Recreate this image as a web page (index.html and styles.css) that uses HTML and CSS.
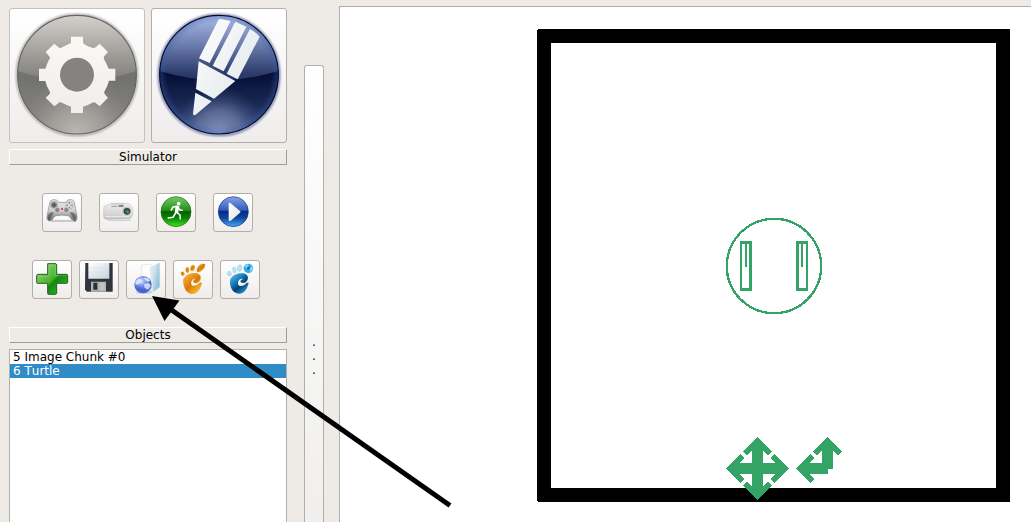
FILE: index.html
```html
<!DOCTYPE html>
<html lang="en">
<head>
<meta charset="utf-8">
<title>Simulator</title>
<link rel="stylesheet" href="styles.css">
</head>
<body>
<div class="app">
  <aside class="panel">
    <div class="modes">
      <button class="tool mode" aria-label="Settings">
        <svg viewBox="27 24 408 405">
          <defs>
            <linearGradient id="gray" x1="0" y1="0" x2="0" y2="1"><stop offset="0" stop-color="#d4d0cc"/><stop offset=".3" stop-color="#a5a19d"/><stop offset=".54" stop-color="#80807c"/><stop offset="1" stop-color="#898682"/></linearGradient>
            <radialGradient id="grayGlow" cx=".5" cy="1" r=".5"><stop offset="0" stop-color="#bbb7b3"/><stop offset=".45" stop-color="#aaa6a2" stop-opacity=".75"/><stop offset="1" stop-color="#888" stop-opacity="0"/></radialGradient>
            <linearGradient id="grayDark" x1="0" y1="0" x2="0" y2="1"><stop offset="0" stop-color="#5d5c59" stop-opacity=".5"/><stop offset="1" stop-color="#777" stop-opacity="0"/></linearGradient>
            <linearGradient id="plate" x1="0" y1="0" x2="0" y2="1"><stop offset="0" stop-color="#faf8f5"/><stop offset="1" stop-color="#f0eeea"/></linearGradient>
            <filter id="soft"><feGaussianBlur stdDeviation="3"/></filter>
          </defs>
          <circle cx="231" cy="225" r="181" fill="none" stroke="#999" stroke-width="5" filter="url(#soft)"/>
          <circle cx="231" cy="224" r="178" fill="url(#gray)"/>
          <path d="M53 213Q231 272 409 213V224A178 178 0 0 1 53 224Z" fill="url(#grayDark)"/>
          <circle cx="231" cy="224" r="178" fill="url(#grayGlow)"/>
          <circle cx="231" cy="224" r="178" fill="none" stroke="#666461" stroke-width="3.5"/>
          <path fill="#858380" d="M180 173H282V275H180Z"/>
          <path fill="url(#plate)" fill-rule="evenodd" d="M213 110H249V128Q250 134 278 144Q284 145 288 141L299 131L324 156L313 168Q309 173 313 179Q323 198 326 206H346V242H327Q323 258 313 275Q310 280 324 293L299 319L287 309Q282 305 277 308Q266 315 249 320V339H213V320Q199 315 180 306L163 319L137 293L149 282Q152 278 148 272Q139 257 136 243H117V206H136Q143 184 151 173L137 156L163 131L175 142Q180 147 188 141Q203 133 213 129ZM231 173A51 51 0 1 0 231 275A51 51 0 1 0 231 173Z"/>
        </svg>
      </button>
      <button class="tool mode" aria-label="Edit">
        <svg viewBox="18 24 408 405">
          <defs>
            <linearGradient id="navy" x1="0" y1="0" x2="0" y2="1"><stop offset="0" stop-color="#adbce8"/><stop offset=".25" stop-color="#6a7bad"/><stop offset=".5" stop-color="#2a3968"/><stop offset=".7" stop-color="#26345f"/><stop offset="1" stop-color="#34487f"/></linearGradient>
            <linearGradient id="navyDark" x1="0" y1="0" x2="0" y2="1"><stop offset="0" stop-color="#020b31"/><stop offset=".5" stop-color="#101e49" stop-opacity=".65"/><stop offset="1" stop-color="#2b3f78" stop-opacity="0"/></linearGradient>
            <radialGradient id="navyGlow" cx=".5" cy="1" r=".4"><stop offset="0" stop-color="#8594c2"/><stop offset=".5" stop-color="#6f7ca5" stop-opacity=".7"/><stop offset="1" stop-color="#34477b" stop-opacity="0"/></radialGradient>
            <radialGradient id="navyEdge"><stop offset=".88" stop-color="#3b60b0" stop-opacity="0"/><stop offset="1" stop-color="#3b60b0" stop-opacity=".4"/></radialGradient>
            <linearGradient id="pencil" x1="0" y1="0" x2="1" y2="1"><stop offset="0" stop-color="#fff"/><stop offset="1" stop-color="#dde3e8"/></linearGradient>
          </defs>
          <circle cx="222" cy="225" r="181" fill="none" stroke="#6b75ad" stroke-width="6" filter="url(#soft)"/>
          <circle cx="222" cy="224" r="178" fill="url(#navy)"/>
          <path d="M44 213Q222 268 400 213V224A178 178 0 0 1 44 224Z" fill="url(#navyDark)"/>
          <circle cx="222" cy="224" r="178" fill="url(#navyGlow)"/>
          <circle cx="222" cy="224" r="178" fill="url(#navyEdge)"/>
          <circle cx="222" cy="224" r="178" fill="none" stroke="#07091d" stroke-width="3.5"/>
          <path fill="url(#pencil)" d="M220 60Q222 56 227 57L257 63L194 189L162 175ZM271 65L304 80L236 214L203 197ZM315 87Q335 98 344 110L278 238L245 221ZM161 184L271 243L207 296L153 267ZM151 278L200 304L151 345Q145 347 144 341Z"/>
        </svg>
      </button>
    </div>
    <div class="title">Simulator</div>
    <div class="tools first">
      <button class="tool" aria-label="Gamepad">
        <svg viewBox="37 24 120 117">
          <defs><linearGradient id="pad" x1="0" y1="0" x2="0" y2="1"><stop offset="0" stop-color="#e6e6e6"/><stop offset=".5" stop-color="#d2d2d2"/><stop offset="1" stop-color="#666"/></linearGradient></defs>
          <path d="M61 49Q68 41 81 45L86 52H108L114 45Q130 41 134 51L142 94Q143 111 133 109Q126 106 118 93Q97 88 77 93Q66 109 59 108Q51 107 52 94Z" fill="url(#pad)" stroke="#8a8a8a" stroke-width="2"/>
          <path d="M55 91Q60 79 73 82L60 105Q53 106 55 91M138 91Q133 79 120 82L134 104Q139 104 138 91" fill="#333" opacity=".5"/>
          <path d="M75 96Q97 89 118 96L123 103H69Z" fill="#fafafa"/>
          <path d="M64 108H130" stroke="#bbb" stroke-width="4"/>
          <circle cx="73" cy="60" r="11" fill="#888" stroke="#ccc" stroke-width="2"/><path d="M73 54V66M67 60H79" stroke="#555" stroke-width="4"/>
          <circle cx="119" cy="61" r="11" fill="#ddd" stroke="#aaa" stroke-width="2"/>
          <path d="M119 52V57M119 65V70M110 61H115M123 61H128" stroke="#888" stroke-width="4"/>
          <circle cx="83" cy="75" r="8" fill="#888" stroke="#ddd" stroke-width="2"/><circle cx="110" cy="75" r="8" fill="#888" stroke="#ddd" stroke-width="2"/>
          <circle cx="97" cy="72" r="3" fill="#e12020"/>
        </svg>
      </button>
      <button class="tool" aria-label="Camera">
        <svg viewBox="207 24 120 117">
          <defs><linearGradient id="cam" x1="0" y1="0" x2="0" y2="1"><stop stop-color="#eee"/><stop offset=".7" stop-color="#d4d4d4"/><stop offset="1" stop-color="#bbb"/></linearGradient></defs>
          <path d="M229 104H305L299 108H238Z" fill="#bbb" opacity=".6"/>
          <path d="M231 60L244 55H292Q309 60 309 79Q309 95 300 101L230 103Q221 102 221 95V68Q222 62 231 60Z" fill="url(#cam)" stroke="#bbb" stroke-width="1.5"/>
          <path d="M244 57H283" stroke="#ccc" stroke-width="4"/><path d="M244 64H262" stroke="#999" stroke-width="3"/><path d="M266 63H281" stroke="#666" stroke-width="4"/>
          <path d="M226 95H298" stroke="#eee" stroke-width="3"/>
          <circle cx="290" cy="79" r="16" fill="#c6c6c6" stroke="#eee" stroke-width="3"/><circle cx="291" cy="79" r="10" fill="#3b403c"/><circle cx="291" cy="79" r="5" fill="#3b7d50"/><circle cx="294" cy="82" r="3" fill="#35bd67"/>
        </svg>
      </button>
      <button class="tool" aria-label="Run">
        <svg viewBox="33 24 120 117">
          <defs><linearGradient id="green" x1="0" y1="0" x2="0" y2="1"><stop stop-color="#77c96d"/><stop offset=".46" stop-color="#228f16"/><stop offset=".5" stop-color="#056000"/><stop offset=".7" stop-color="#098007"/><stop offset="1" stop-color="#40e51d"/></linearGradient></defs>
          <circle cx="93" cy="80" r="45" fill="url(#green)" stroke="#196713" stroke-width="2"/>
          <circle cx="101" cy="56" r="5.500" fill="#fff"/>
          <path d="M95 64L83 67L78 77M97 83L105 90L106 103M92 84L84 97L68 99M99 67L105 75L113 76" fill="none" stroke="#fff" stroke-width="4.500" stroke-linejoin="round"/><path d="M92 62L103 63L99 86L89 84Z" fill="#fff"/>
        </svg>
      </button>
      <button class="tool" aria-label="Play">
        <svg viewBox="204 24 120 117">
          <defs><linearGradient id="blue" x1="0" y1="0" x2="0" y2="1"><stop stop-color="#86a4e4"/><stop offset=".44" stop-color="#335ebf"/><stop offset=".5" stop-color="#052c80"/><stop offset=".7" stop-color="#0e469d"/><stop offset="1" stop-color="#44a8ff"/></linearGradient></defs>
          <circle cx="265" cy="80" r="45" fill="url(#blue)" stroke="#17377e" stroke-width="2"/><path d="M251 54Q254 52 257 55L286 79Q287 81 285 83L257 107Q251 110 251 105Z" fill="url(#pencil)"/>
        </svg>
      </button>
    </div>
    <div class="tools second">
      <button class="tool" aria-label="Add">
        <svg viewBox="21 30 120 117">
          <defs><linearGradient id="plus" x1="0" y1="0" x2="1" y2="1"><stop stop-color="#a1df8c"/><stop offset=".5" stop-color="#49b22b"/><stop offset=".58" stop-color="#128613"/><stop offset="1" stop-color="#3dcc27"/></linearGradient></defs>
          <path d="M68 41H93Q95 42 95 45V73H125Q128 74 128 77V97Q128 100 125 100H95V130Q94 133 91 133H71Q68 133 68 130V100H38Q35 100 35 97V77Q35 74 38 73H68Z" fill="url(#plus)" stroke="#24601e" stroke-width="3"/>
          <path d="M72 45H91V77H124M39 79H72V46" fill="none" stroke="#a4dc97" stroke-width="2" opacity=".6"/>
        </svg>
      </button>
      <button class="tool" aria-label="Save">
        <svg viewBox="162 30 120 117">
          <defs><linearGradient id="disk" x1="0" y1="0" x2="1" y2="1"><stop stop-color="#fff"/><stop offset="1" stop-color="#c7d1dc"/></linearGradient></defs>
          <path d="M181 39H263V125H186L180 119Z" fill="#30343e"/><path d="M190 39H253V86H190Z" fill="url(#disk)"/><path d="M191 54H252M191 66H252M191 78H252" stroke="#cad3dc" stroke-width="1"/><path d="M198 95H243V125H198Z" fill="#b4b2af"/><path d="M205 98H217V119H205Z" fill="#292d37"/><path d="M224 98H239V121H224Z" fill="#c5c3c0"/>
        </svg>
      </button>
      <button class="tool" aria-label="Open from web">
        <svg viewBox="18 30 120 117">
          <defs><linearGradient id="folder" x1="0" y1="0" x2="1" y2="1"><stop stop-color="#e4f1fa"/><stop offset="1" stop-color="#7cb1d4"/></linearGradient><radialGradient id="globe" cx=".4" cy=".3"><stop stop-color="#d8e3ff"/><stop offset=".5" stop-color="#7f9ae7"/><stop offset="1" stop-color="#4766ca"/></radialGradient></defs>
          <path d="M64 46L92 42L99 48V116L64 112Z" fill="#fcfcfc" stroke="#ddd" stroke-width="2"/><path d="M90 49L102 51V117L90 122Z" fill="#e1e7eb"/>
          <path d="M99 49L117 39L119 40V111L99 126Z" fill="url(#folder)" stroke="#b5d3e7" stroke-width="1"/>
          <ellipse cx="72" cy="126" rx="25" ry="6" fill="#91a8ed" opacity=".45"/><circle cx="69" cy="104" r="26" fill="url(#globe)"/>
          <path d="M46 94L57 85L65 91L59 101L47 105ZM70 84L83 83L91 92L83 96L76 91ZM72 103L85 98L93 107L84 119L74 114Z" fill="#e7edff" opacity=".8"/><path d="M57 110L67 116L61 125L52 118Z" fill="#4966c4" opacity=".7"/>
        </svg>
      </button>
      <button class="tool" aria-label="Orange footprint">
        <svg viewBox="159 30 120 117">
          <defs><linearGradient id="orange" x1="0" y1="0" x2=".8" y2="1"><stop stop-color="#ffc148"/><stop offset=".55" stop-color="#dc7604"/><stop offset="1" stop-color="#ffc928"/></linearGradient></defs>
          <g fill="url(#orange)" stroke="#d27a0a" stroke-width="1"><path d="M231 62C231 46 244 40 254 42C258 52 245 66 232 66Z"/><ellipse cx="218" cy="54" rx="6" ry="9" transform="rotate(13 218 53)"/><ellipse cx="202" cy="60" rx="5" ry="8" transform="rotate(-8 202 60)"/><ellipse cx="188" cy="71" rx="5" ry="6" transform="rotate(-35 188 71)"/>
          <path d="M190 91C195 73 216 67 233 71C249 77 241 98 228 99C217 99 218 90 228 87C220 84 212 92 213 101C215 112 230 109 239 98H245C240 119 231 132 214 131C197 129 191 112 190 91Z"/></g>
        </svg>
      </button>
      <button class="tool" aria-label="Blue footprint">
        <svg viewBox="300 30 120 117">
          <defs><linearGradient id="cyan" x1="0" y1="0" x2=".8" y2="1"><stop stop-color="#77ccec"/><stop offset=".4" stop-color="#137ebd"/><stop offset=".65" stop-color="#083f74"/><stop offset="1" stop-color="#24a2e8"/></linearGradient></defs>
          <g fill="#bae4f5" stroke="#77bddd" stroke-width="1"><ellipse cx="359" cy="54" rx="7" ry="10" transform="rotate(13 359 53)"/><ellipse cx="343" cy="60" rx="5" ry="9" transform="rotate(-8 343 60)"/><ellipse cx="328" cy="71" rx="6" ry="7" transform="rotate(-35 328 71)"/></g>
          <path d="M330 91C335 73 358 67 375 71C391 77 383 98 370 99C358 99 359 90 369 87C361 84 353 92 354 101C356 112 371 109 380 98H386C381 119 372 132 355 131C338 129 328 112 330 91Z" fill="url(#cyan)"/>
          <circle cx="385" cy="55" r="14" fill="#36aae5"/><path d="M374 48L383 43L387 49L381 55ZM388 58L395 49L398 57L391 66Z" fill="#8fdcf7"/><path d="M383 49L390 51L387 61L381 57Z" fill="#086bb6"/>
        </svg>
      </button>
    </div>
    <div class="title">Objects</div>
    <ul class="list"><li>5 Image Chunk #0</li><li class="selected">6 Turtle</li></ul>
  </aside>
  <div class="splitter"><span>.</span><span>.</span><span>.</span></div>
  <main class="canvas">
    <svg class="scene" viewBox="340 7 691 515" shape-rendering="crispEdges">
      <path d="M538 29H1009L1010 30V501L1009 502H538L537 501V30ZM551 43V488H996V43Z" fill-rule="evenodd"/>
      <g fill="none" stroke="#33a366" stroke-width="2" stroke-linejoin="round">
        <circle cx="774" cy="266" r="47.200" stroke-width="2.300"/>
        <path d="M741 242H751V290H741ZM746 242V267M797 242H807V290H797ZM802 242V267"/>
        <path d="M741 242.500H751M741 289.500H751M797 242.500H807M797 289.500H807" stroke-width="3"/><path d="M750.500 242V290M797.500 242V290" stroke-width="3"/>
      </g>
      <g fill="#33a366">
        <path d="M757.500 437L772 451.500L768 455.500L763 450.500V463H775.500L770.500 458L774.500 454L789 468.500L774.500 483L770.500 479L775.500 474H763V486.500L768 481.500L772 485.500L757.500 500L743 485.500L747 481.500L752 486.500V474H739.500L744.500 479L740.500 483L726 468.500L740.500 454L744.500 458L739.500 463H752V450.500L747 455.500L743 451.500Z"/>
        <path d="M827.500 437L842 451.500L838 455.500L833 450.500V469H828V474H809.500L814.500 479L810.500 483L796 468.500L810.500 454L814.500 458L809.500 463H822V450.500L817 455.500L813 451.500Z"/>
      </g>
    </svg>
  </main>
</div>
<svg class="pointer" viewBox="0 0 1031 522"><path d="M168 307.500L450 505.500" stroke="#000" stroke-width="5"/><path d="M152 296L179.500 300.500L164.500 321Z"/></svg>
</body>
</html>
```

FILE: styles.css
```css
* { box-sizing: border-box; }
body {
  margin: 0;
  height: 522px;
  overflow: hidden;
  background: #eeebe7;
  color: #000;
  font: 12px/14px "DejaVu Sans", sans-serif;
  font-kerning: none;
}
.app { display: flex; height: 522px; }
.panel {
  display: flex;
  flex-direction: column;
  width: 278px;
  margin-left: 9px;
  padding-top: 8px;
}
.modes { display: flex; gap: 6px; margin-bottom: 6px; }
.tool {
  display: block;
  width: 40px;
  height: 39px;
  padding: 0;
  overflow: hidden;
  border: 1px solid #b2afab;
  border-radius: 3px;
  background: linear-gradient(#fff, #efedeb);
}
.tool svg { display: block; width: 40px; height: 39px; margin: -1px; }
.tool.mode { width: 136px; height: 135px; }
.tool.mode svg { width: 136px; height: 135px; }
.mode:first-child { border-color: #c5c2be; }
.title {
  height: 16px;
  flex: none;
  border: 1px solid;
  border-color: #fff #9e9b98 #9e9b98 #fff;
  text-align: center;
}
.tools { display: flex; justify-content: center; }
.first { gap: 17px; margin-top: 28px; padding-right: 1px; }
.second { gap: 7px; margin: 28px 0; padding-right: 4px; }
.list {
  flex: 1;
  margin: 6px 0 0;
  padding: 0;
  border: 1px solid #b2afab;
  border-bottom: 0;
  background: #fff;
  list-style: none;
}
.list li { height: 14px; padding-left: 3px; }
.list .selected { background: #308cc6; color: #fff; }
.splitter {
  display: flex;
  flex-direction: column;
  align-items: center;
  width: 20px;
  margin: 65px 15px 0 17px;
  padding-top: 269px;
  border: 1px solid #b2afab;
  border-bottom: 0;
  border-radius: 3px 3px 0 0;
  background: linear-gradient(#fff, #f0efee);
}
.canvas {
  flex: 1;
  margin-top: 6px;
  border: 1px solid #b2afab;
  border-width: 1px 0 0 1px;
  background: #fff;
}
.scene { display: block; width: 691px; height: 515px; }
.pointer { position: absolute; inset: 0; width: 1031px; height: 522px; pointer-events: none; }
```
